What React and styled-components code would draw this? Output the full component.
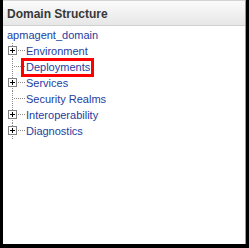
import styled, { createGlobalStyle } from "styled-components";

const GlobalStyle = createGlobalStyle`
  html, body {
    margin: 0;
    padding: 0;
    background: #000;
  }
  body {
    width: 249px;
    height: 248px;
    overflow: hidden;
    font-family: "Liberation Sans", Arial, sans-serif;
  }
`;

const Panel = styled.section`
  box-sizing: border-box;
  width: 243px;
  height: 244px;
  margin: 0 3px 4px 3px;
  background: #fff;
  border-top: 1px solid #d4d4d4;
  border-right: 1px solid #9a9a9a;
  display: flex;
  flex-direction: column;
`;

const Header = styled.h2`
  box-sizing: border-box;
  margin: 0;
  height: 25px;
  padding: 2px 0 0 4px;
  line-height: 22px;
  font-size: 12px;
  font-weight: bold;
  color: #383838;
  background: linear-gradient(#fbfbfb, #e7e7e7);
  border-bottom: 1px solid #cfcfcf;
`;

const Tree = styled.ul`
  list-style: none;
  margin: 0;
  padding: 1px 0 0 4px;
  font-size: 11px;
  line-height: 16px;
`;

const Row = styled.li`
  display: flex;
  align-items: center;
  height: 16px;
  white-space: nowrap;
`;

const Label = styled.span`
  position: relative;
  color: #2440a2;
  cursor: pointer;

  ${({ $marked }) =>
    $marked &&
    `
    &::after {
      content: "";
      position: absolute;
      top: -1px;
      bottom: -2px;
      left: -5px;
      right: -4px;
      border: 3px solid #f00;
    }
  `}
`;

const ConnectorSvg = styled.svg`
  display: block;
  flex: none;
  width: 19px;
  height: 16px;
`;

const Connector = ({ expandable }) => (
  <ConnectorSvg viewBox="0 0 19 16">
    <g stroke="#8a8a8a" strokeWidth="1" strokeDasharray="1 1" fill="none">
      {expandable ? (
        <>
          <line x1="5.5" y1="0" x2="5.5" y2="3" />
          <line x1="5.5" y1="13" x2="5.5" y2="16" />
          <line x1="11" y1="7.5" x2="19" y2="7.5" />
        </>
      ) : (
        <>
          <line x1="5.5" y1="0" x2="5.5" y2="16" />
          <line x1="7" y1="7.5" x2="19" y2="7.5" />
        </>
      )}
    </g>
    {expandable && (
      <g fill="none">
        <rect x="1.5" y="3.5" width="8" height="8" stroke="#808080" fill="#fff" />
        <line x1="3" y1="7.5" x2="8" y2="7.5" stroke="#000" />
        <line x1="5.5" y1="5" x2="5.5" y2="10" stroke="#000" />
      </g>
    )}
  </ConnectorSvg>
);

const nodes = [
  { name: "Environment", expandable: true },
  { name: "Deployments", marked: true },
  { name: "Services", expandable: true },
  { name: "Security Realms" },
  { name: "Interoperability", expandable: true },
  { name: "Diagnostics", expandable: true },
];

export default function App() {
  return (
    <>
      <GlobalStyle />
      <Panel>
        <Header>Domain Structure</Header>
        <Tree>
          <Row>
            <Label>apmagent_domain</Label>
          </Row>
          {nodes.map((n) => (
            <Row key={n.name}>
              <Connector expandable={n.expandable} />
              <Label $marked={n.marked}>{n.name}</Label>
            </Row>
          ))}
        </Tree>
      </Panel>
    </>
  );
}
